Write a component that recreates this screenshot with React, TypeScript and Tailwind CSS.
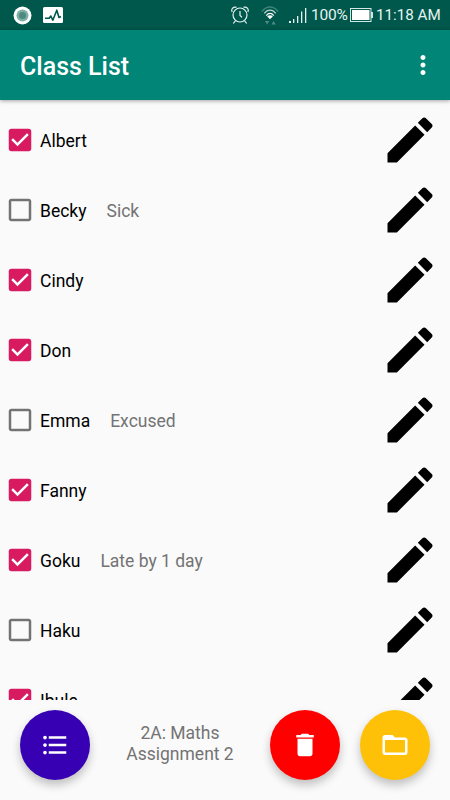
import { useState } from "react";

interface Student {
  name: string;
  present: boolean;
  note?: string;
}

const initialStudents: Student[] = [
  { name: "Albert", present: true },
  { name: "Becky", present: false, note: "Sick" },
  { name: "Cindy", present: true },
  { name: "Don", present: true },
  { name: "Emma", present: false, note: "Excused" },
  { name: "Fanny", present: true },
  { name: "Goku", present: true, note: "Late by 1 day" },
  { name: "Haku", present: false },
  { name: "Ibule", present: true },
];

function StatusBar() {
  return (
    <div className="flex h-[30px] shrink-0 items-center justify-between bg-[#00574b] pr-[10px] pl-[13px] text-[#e6f3f1]">
      <div className="flex items-center gap-[11px]">
        <svg className="size-[19px]" viewBox="0 0 19 19">
          <circle cx="9.5" cy="9.5" r="9" fill="#fff" />
          <circle cx="9.5" cy="9.5" r="6" fill="#7fb0a8" />
          <circle cx="9.5" cy="9.5" r="3.6" fill="#4d8a80" />
        </svg>
        <svg className="h-[16px] w-[20px]" viewBox="0 0 20 16">
          <rect width="20" height="16" rx="1.5" fill="#fff" />
          <path
            d="M2 11.2h4.2l1.6-2.2 2 4.200L13.800 3.200l2.200 7.300 2-1"
            fill="none"
            stroke="#00574b"
            strokeWidth="1.6"
            strokeLinejoin="round"
          />
        </svg>
      </div>
      <div className="flex items-center">
        <svg className="mr-[12px] size-[18px]" viewBox="0 0 18 18" fill="none" stroke="#e6f3f1" strokeWidth="1.2">
          <circle cx="9" cy="9" r="7" />
          <path d="M9 5v4.400l2 2M4.400 14.800 2.300 17.500M13.600 14.800l2.100 2.700" />
          <path d="M1.200 6C-.2 3.200 2.300.2 5.600 1.300M16.800 6c1.400-2.800-1.100-5.800-4.400-4.700" />
        </svg>
        <svg className="mr-[9px] h-[20px] w-[19px]" viewBox="0 0 19 20" fill="none" strokeWidth="1.3">
          <path d="M.9 6.500C5.500.5 12.500.5 17.100 6.500" stroke="#3f8379" />
          <path d="M3.300 8.300c3.300-4.200 8.100-4.200 11.400 0" stroke="#b4d3ce" />
          <path d="M5.300 10.600c2.200-2.900 5.200-2.900 7.400 0" stroke="#fff" />
          <path d="M9 14.200 6.200 11.400c1.600-1.500 4-1.500 5.600 0z" fill="#fff" />
          <path d="M4 16h4.200l-2.100 3.500zM10.500 19.500h4.200L12.600 16z" fill="#4f8d84" />
        </svg>
        <svg className="mr-[4px] h-[17px] w-[18px]" viewBox="0 0 18 17" fill="#e6f3f1">
          <path d="M0 14h2v2H0zM4 12h1.300v4H4zM8 9h1.300v7H8zM12 4.500h1.300V16H12zM16 1h1.300v15H16z" />
        </svg>
        <span className="w-[37px] pt-px text-[15.5px] tracking-[-0.2px]">100%</span>
        <svg className="mr-[3px] ml-[2px] h-[14px] w-[23px]" viewBox="0 0 23 14">
          <rect x=".5" y=".5" width="20.500" height="13" fill="none" stroke="#d5e7e4" />
          <rect x="2" y="2" width="17.500" height="10" fill="#fff" />
          <rect x="21" y="4" width="2" height="6" fill="#d5e7e4" />
        </svg>
        <span className="w-[64px] pt-px text-[15.200px] whitespace-nowrap">11:18 AM</span>
      </div>
    </div>
  );
}

function CheckIcon({ checked }: { checked: boolean }) {
  return checked ? (
    <svg className="size-[30px]" viewBox="0 0 24 24" fill="#d81b60">
      <path d="M19 3H5c-1.110 0-2 .9-2 2v14c0 1.100.890 2 2 2h14c1.110 0 2-.9 2-2V5c0-1.100-.890-2-2-2z" />
      <path d="M10 17l-5-5 1.410-1.410L10 14.170l7.590-7.590L19 8l-9 9z" fill="#fff" />
    </svg>
  ) : (
    <svg className="size-[30px]" viewBox="0 0 24 24" fill="#737373">
      <path d="M19 5v14H5V5h14m0-2H5c-1.100 0-2 .9-2 2v14c0 1.100.9 2 2 2h14c1.100 0 2-.9 2-2V5c0-1.100-.9-2-2-2z" />
    </svg>
  );
}

function StudentRow({ student, onToggle }: { student: Student; onToggle: () => void }) {
  return (
    <li className="flex h-[70px] shrink-0 items-center pr-[10px] pl-[5px] text-[17.5px]">
      <button
        role="checkbox"
        aria-checked={student.present}
        onClick={onToggle}
        className="flex items-center gap-[5px] text-black"
      >
        <CheckIcon checked={student.present} />
        <span className="pt-[2px]">{student.name}</span>
      </button>
      {student.note && <span className="ml-[20px] pt-[2px] text-[#737373]">{student.note}</span>}
      <button className="ml-auto" aria-label="Edit">
        <svg className="size-[60px]" viewBox="0 0 24 24" fill="#000">
          <path d="M3 17.250V21h3.750L17.810 9.940l-3.750-3.750L3 17.250zM20.710 7.040c.390-.390.390-1.020 0-1.410l-2.340-2.340c-.390-.390-1.020-.390-1.410 0l-1.830 1.830 3.750 3.750 1.830-1.830z" />
        </svg>
      </button>
    </li>
  );
}

const fab = "flex size-[70px] items-center justify-center rounded-full shadow-[0_5px_10px_rgba(0,0,0,0.24)]";

export default function App() {
  const [students, setStudents] = useState(initialStudents);

  const toggle = (index: number) =>
    setStudents(students.map((s, i) => (i === index ? { ...s, present: !s.present } : s)));

  return (
    <div className="flex h-screen flex-col overflow-hidden bg-[#fafafa] font-[Roboto,sans-serif]">
      <StatusBar />

      <header className="z-10 flex h-[70px] shrink-0 items-center justify-between bg-[#008577] pr-[12.5px] pl-[20px] shadow-[0_1px_4px_rgba(0,0,0,0.35)]">
        <h1 className="pt-[3px] text-[25px] font-medium text-white">Class List</h1>
        <button aria-label="More options">
          <svg className="size-[30px]" viewBox="0 0 24 24" fill="#fff">
            <path d="M12 8c1.100 0 2-.9 2-2s-.9-2-2-2-2 .9-2 2 .9 2 2 2zm0 2c-1.100 0-2 .9-2 2s.9 2 2 2 2-.9 2-2-.9-2-2-2zm0 6c-1.100 0-2 .9-2 2s.9 2 2 2 2-.9 2-2-.9-2-2-2z" />
          </svg>
        </button>
      </header>

      <ul className="flex min-h-0 flex-1 flex-col overflow-hidden pt-[5px]">
        {students.map((student, i) => (
          <StudentRow key={student.name} student={student} onToggle={() => toggle(i)} />
        ))}
      </ul>

      <footer className="flex h-[100px] shrink-0 items-start px-[20px] pt-[10px]">
        <button className={`${fab} bg-[#3700b3]`} aria-label="Lists">
          <svg className="size-[30px]" viewBox="0 0 24 24" fill="#fff">
            <path d="M4 10.500c-.830 0-1.500.670-1.500 1.500s.670 1.500 1.500 1.500 1.500-.670 1.500-1.500-.670-1.500-1.500-1.500zm0-6c-.830 0-1.500.670-1.500 1.500S3.170 7.500 4 7.500 5.500 6.830 5.500 6 4.830 4.500 4 4.500zm0 12c-.830 0-1.500.680-1.500 1.500s.680 1.500 1.500 1.500 1.500-.680 1.500-1.500-.670-1.500-1.500-1.500zM7 19h14v-2H7v2zm0-6h14v-2H7v2zm0-8v2h14V5H7z" />
          </svg>
        </button>
        <p className="flex-1 pt-[13px] text-center text-[17.5px] leading-[20.5px] text-[#737373]">
          2A: Maths
          <br />
          Assignment 2
        </p>
        <div className="flex gap-[20px]">
          <button className={`${fab} bg-[#ff0000]`} aria-label="Delete">
            <svg className="size-[30px]" viewBox="0 0 24 24" fill="#fff">
              <path d="M6 19c0 1.100.9 2 2 2h8c1.100 0 2-.9 2-2V7H6v12zM19 4h-3.500l-1-1h-5l-1 1H5v2h14V4z" />
            </svg>
          </button>
          <button className={`${fab} bg-[#ffc107]`} aria-label="Open folder">
            <svg className="size-[30px]" viewBox="0 0 24 24" fill="#fff">
              <path d="M20 6h-8l-2-2H4c-1.100 0-1.990.9-1.990 2L2 18c0 1.100.9 2 2 2h16c1.100 0 2-.9 2-2V8c0-1.100-.9-2-2-2zm0 12H4V8h16v10z" />
            </svg>
          </button>
        </div>
      </footer>
    </div>
  );
}
